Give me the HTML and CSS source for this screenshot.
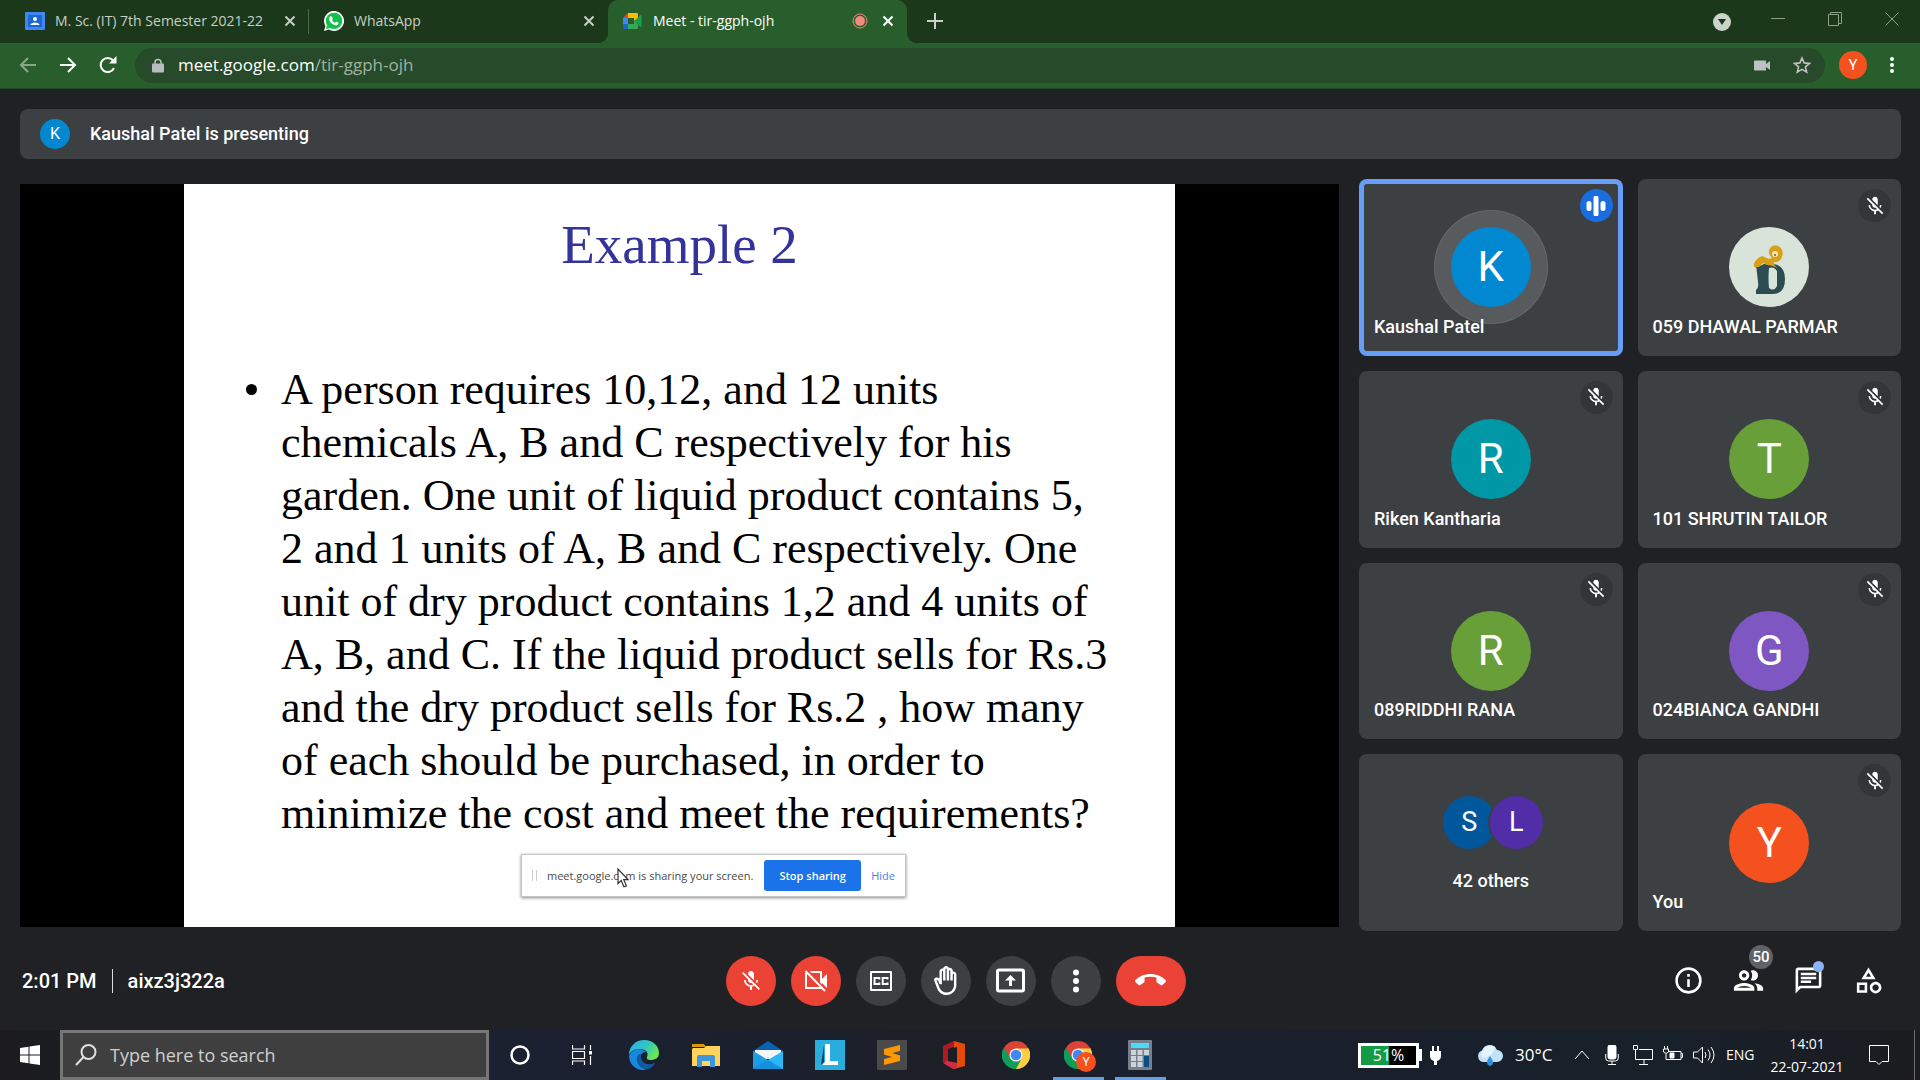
FILE: index.html
```html
<!DOCTYPE html>
<html lang="en">
<head>
<meta charset="utf-8">
<title>Meet - tir-ggph-ojh</title>
<link rel="stylesheet" href="styles.css">
</head>
<body>
<svg class="defs" aria-hidden="true">
  <symbol id="close" viewBox="0 0 12 12"><path d="M1.500 1.500l9 9m0-9l-9 9" stroke="currentColor" stroke-width="2" fill="none"/></symbol>
  <symbol id="mic-off" viewBox="0 0 24 24"><path fill="currentColor" d="M19 11h-1.700c0 .74-.16 1.430-.43 2.050l1.230 1.230c.56-.98.9-2.090.9-3.280zm-4.020.17c0-.06.02-.11.02-.17V5c0-1.660-1.340-3-3-3S9 3.340 9 5v.18l5.980 5.990zM4.270 3L3 4.270l6.010 6.010V11c0 1.660 1.330 3 2.990 3 .22 0 .44-.03.65-.08l1.660 1.660c-.71.33-1.500.52-2.310.52-2.760 0-5.300-2.100-5.300-5.100H5c0 3.410 2.720 6.230 6 6.720V21h2v-3.280c.91-.13 1.770-.45 2.540-.9L19.730 21 21 19.730 4.270 3z"/></symbol>
  <symbol id="chrome" viewBox="0 0 32 32">
    <path fill="#db4437" d="M16 16L2.140 8A16 16 0 0 1 29.860 8z"/>
    <path fill="#ffcd40" d="M16 16L29.860 8A16 16 0 0 1 16 32z"/>
    <path fill="#0f9d58" d="M16 16l0 16A16 16 0 0 1 2.140 8z"/>
    <path fill="#db4437" d="M16 8.500H30.100L29.860 8 16 4 2.140 8l7.300 11.500z"/>
    <path fill="#ffcd40" d="M16 8.500h14.100A16 16 0 0 1 16 32l6.600-12.200z"/>
    <path fill="#0f9d58" d="M2.140 8A16 16 0 0 0 16 32l6.600-12.200L16 23l-6.500-3.200z"/>
    <circle cx="16" cy="16" r="7.500" fill="#f1f1f1"/><circle cx="16" cy="16" r="6" fill="#4285f4"/>
  </symbol>
</svg>

<header class="browser">
  <nav class="tabs" aria-label="Tabs">
    <div class="tab tab-first">
      <svg class="favicon" viewBox="0 0 20 20"><rect width="20" height="18" y="1" rx="1" fill="#4285f4"/><rect x="3" y="4" width="14" height="12" fill="#1967d2"/><circle cx="10" cy="8" r="2" fill="#fff"/><path d="M5.500 14c0-3.500 9-3.500 9 0z" fill="#fff"/></svg>
      <span class="tab-title">M. Sc. (IT) 7th Semester 2021-22</span>
      <button class="tab-close" aria-label="Close tab"><svg><use href="#close"/></svg></button>
    </div>
    <div class="tab">
      <svg class="favicon" viewBox="0 0 20 20"><path d="M0 20l1.400-5A10 10 0 1 1 5 18.600z" fill="#fff"/><circle cx="10" cy="9.900" r="8.200" fill="#12c04b"/><path d="M2 18l1-4 3 3z" fill="#12c04b"/><path d="M6.500 5.300l1.300 0 1 2.400-.8 1.200c.8 1.400 1.700 2.300 3.200 2.900l1-1.200 2.300 1.100c.2 1.700-1.200 2.600-2.600 2.600-3.600-.4-6.300-3.200-6.800-6 0-1.400.6-2.500 1.400-3z" fill="#fff"/></svg>
      <span class="tab-title">WhatsApp</span>
      <button class="tab-close" aria-label="Close tab"><svg><use href="#close"/></svg></button>
    </div>
    <div class="tab tab-active">
      <svg class="favicon" viewBox="0 0 20 20"><path d="M0 7l5-5v5z" fill="#ea4335"/><path d="M5 2h8.500c1 0 1.500.5 1.500 1.500V8l-4 3V7H5z" fill="#fbbc04"/><path d="M0 7h5v6H0z" fill="#4285f4"/><path d="M0 13h5v5H1.500C.5 18 0 17.500 0 16.500z" fill="#1967d2"/><path d="M5 13h6V9l4 3v4.500c0 1-.5 1.500-1.500 1.500H5z" fill="#34a853"/><path d="M11 10l6.500-6c.6-.4 1 0 1 .5v11c0 .5-.4.9-1 .5z" fill="#1e9e4b"/></svg>
      <span class="tab-title">Meet - tir-ggph-ojh</span>
      <svg class="recording" viewBox="0 0 16 16"><circle cx="8" cy="8" r="7" fill="none" stroke="#f28b82"/><circle cx="8" cy="8" r="5" fill="#f28b82"/></svg>
      <button class="tab-close" aria-label="Close tab"><svg><use href="#close"/></svg></button>
    </div>
    <button class="new-tab" aria-label="New tab"><svg viewBox="0 0 16 16"><path d="M8 0v16M0 8h16" stroke="#cbd2cb" stroke-width="2"/></svg></button>
    <div class="window-controls">
      <button class="media" aria-label="Search tabs"><svg viewBox="0 0 18 18"><circle cx="9" cy="9" r="9" fill="#cbd3cb"/><path d="M5 6h8l-4 6z" fill="#1c381b"/></svg></button>
      <button aria-label="Minimize"><svg viewBox="0 0 14 14"><path d="M0 6.500h14"/></svg></button>
      <button aria-label="Restore"><svg viewBox="0 0 14 14"><path d="M.5 2.500h10v11H.5zM2.500 2.500v-2h11v11h-3"/></svg></button>
      <button aria-label="Close"><svg viewBox="0 0 14 14"><path d="M.5.5l13 13m0-13l-13 13"/></svg></button>
    </div>
  </nav>
  <div class="toolbar">
    <button class="nav-button dim" aria-label="Back"><svg viewBox="0 0 18 18"><path d="M17 9H2m7-7L2 9l7 7"/></svg></button>
    <button class="nav-button" aria-label="Forward"><svg viewBox="0 0 18 18"><path d="M1 9h15M9 2l7 7-7 7"/></svg></button>
    <button class="nav-button" aria-label="Reload"><svg viewBox="0 0 18 18"><path d="M15 12A7 7 0 1 1 14 4.500"/><path d="M17.500 0v7.500H10z" class="solid"/></svg></button>
    <div class="omnibox">
      <svg class="lock" viewBox="0 0 12 14"><path d="M3 6V4a3 3 0 0 1 6 0v2" fill="none" stroke="#b9c2ba" stroke-width="1.500"/><rect y="5" width="12" height="9" rx="1" fill="#b9bcc0"/></svg>
      <div class="url" role="textbox" contenteditable="true" spellcheck="false" aria-label="Address">meet.google.com<span>/tir-ggph-ojh</span></div>
      <svg class="camera" viewBox="0 0 16 12"><path d="M1 1h11v3.500L16 1.500v9L12 7.500V11H1q-1 0-1-1V2q0-1 1-1z" fill="#bdc1c0"/></svg>
      <button class="star" aria-label="Bookmark this tab"><svg viewBox="0 0 18 18"><path d="M9 2l2.100 4.900 5.400.5-4.100 3.500 1.300 5.300L9 13.400l-4.700 2.800 1.300-5.300L1.500 7.400l5.400-.5z" fill="none" stroke="#bdc1c0" stroke-width="1.600"/></svg></button>
    </div>
    <button class="profile" aria-label="Profile">Y</button>
    <button class="menu" aria-label="Menu"><svg viewBox="0 0 4 18"><circle cx="2" cy="3" r="2"/><circle cx="2" cy="9" r="2"/><circle cx="2" cy="15" r="2"/></svg></button>
  </div>
</header>

<main class="meet">
  <div class="banner"><span class="avatar avatar-small blue">K</span><span>Kaushal Patel is presenting</span></div>

  <div class="content">
    <section class="stage" aria-label="Presentation">
      <div class="slide">
        <h1>Example 2</h1>
        <ul>
          <li>A person requires 10,12, and 12 units<br>chemicals A, B and C respectively for his<br>garden. One unit of liquid product contains 5,<br>2 and 1 units of A, B and C respectively. One<br>unit of dry product contains 1,2 and 4 units of<br>A, B, and C. If the liquid product sells for Rs.3<br>and the dry product sells for Rs.2 , how many<br>of each should be purchased, in order to<br>minimize the cost and meet the requirements?</li>
        </ul>
        <div class="share">
          <span class="grip"></span>
          <span class="share-text">meet.google.com is sharing your screen.</span>
          <button class="stop">Stop sharing</button>
          <a href="#">Hide</a>
          <svg class="cursor" viewBox="0 0 12 20"><path d="M1 1v14.500l3.200-3 2.700 6.300 2.500-1-2.700-6.200h4.300z" fill="#fff" stroke="#333" stroke-width="1.200"/></svg>
        </div>
      </div>
    </section>

    <section class="people" aria-label="Participants">
      <article class="tile speaking"><span class="badge speaker"><svg viewBox="0 0 20 20"><path d="M3 7.500v5M10 2v16M17 7.500v5" stroke="#fff" stroke-width="5" stroke-linecap="round"/></svg></span><span class="avatar blue">K</span><span class="name">Kaushal Patel</span></article>
      <article class="tile"><span class="badge"><svg><use href="#mic-off"/></svg></span>
        <svg class="avatar" viewBox="0 0 80 80"><rect width="80" height="80" fill="#d8e4d9"/><path fill="#2b4c50" d="M27 38q4 2 8-1h9q12 1 12 15 0 15-12 15H27v-4q3-2 2-8l-1-9zm13 3q-1 10 0 20 5 4 8-2V44q-3-5-8-3z"/><path fill="#d9a017" d="M25 40q0-8 8-11l7 3 3-1q-5-5-2-10 4-5 10-1 5 5 1 12-3 4-7 3-1 3 4 6-7-3-11-3l-4-2-4 4z"/><circle cx="46" cy="27" r="3" fill="#efe9c0"/><circle cx="46" cy="28" r="1" fill="#7a5a10"/><path d="M28 33q-5 5-1 8" fill="none" stroke="#d9a017"/></svg>
        <span class="name">059 DHAWAL PARMAR</span></article>
      <article class="tile"><span class="badge"><svg><use href="#mic-off"/></svg></span><span class="avatar teal">R</span><span class="name">Riken Kantharia</span></article>
      <article class="tile"><span class="badge"><svg><use href="#mic-off"/></svg></span><span class="avatar green">T</span><span class="name">101 SHRUTIN TAILOR</span></article>
      <article class="tile"><span class="badge"><svg><use href="#mic-off"/></svg></span><span class="avatar green">R</span><span class="name">089RIDDHI RANA</span></article>
      <article class="tile"><span class="badge"><svg><use href="#mic-off"/></svg></span><span class="avatar purple">G</span><span class="name">024BIANCA GANDHI</span></article>
      <article class="tile others"><div class="pair"><span class="avatar navy">S</span><span class="avatar indigo">L</span></div><span>42 others</span></article>
      <article class="tile"><span class="badge"><svg><use href="#mic-off"/></svg></span><span class="avatar orange">Y</span><span class="name">You</span></article>
    </section>
  </div>

  <footer class="controls">
    <div class="meeting"><time>2:01 PM</time><span class="code">aixz3j322a</span></div>
    <div class="calls">
      <button class="red" aria-label="Turn on microphone"><svg class="i24"><use href="#mic-off"/></svg></button>
      <button class="red" aria-label="Turn on camera"><svg class="i24" viewBox="0 0 24 24"><path d="M6 3h11v16H6L2 19V4" fill="none" stroke="currentColor" stroke-width="2"/><path d="M18 10l5-5v14l-5-5z" fill="currentColor"/><path d="M3.500 1.500l19 20" stroke="#ea4335" stroke-width="2"/><path d="M1.500 2l19.500 20" stroke="currentColor" stroke-width="2"/></svg></button>
      <button aria-label="Captions"><svg class="i24" viewBox="0 0 24 24"><path d="M2 3h20v18H2z" fill="none" stroke="currentColor" stroke-width="2" stroke-linejoin="round"/><path d="M10.300 10.500V9H5.500v6h4.800v-1.500M18.500 10.500V9h-4.800v6h4.800v-1.500" fill="none" stroke="currentColor" stroke-width="2"/></svg></button>
      <button aria-label="Raise hand"><svg class="i29" viewBox="0 0 24 24"><path fill="currentColor" d="M21 7c0-1.380-1.120-2.500-2.500-2.500-.17 0-.34.02-.5.05V4c0-1.380-1.120-2.500-2.500-2.500-.23 0-.46.03-.67.09C14.460.66 13.560 0 12.500 0c-1.230 0-2.250.89-2.460 2.060C9.870 2.020 9.690 2 9.500 2 8.120 2 7 3.120 7 4.500v5.890c-.34-.31-.76-.54-1.220-.66L5.010 9.520c-.83-.23-1.700.09-2.190.83-.38.57-.4 1.310-.15 1.950l2.560 6.430C6.490 21.910 9.570 24 13 24c4.420 0 8-3.580 8-8V7zm-2 9c0 3.310-2.690 6-6 6-2.610 0-4.950-1.590-5.910-4.010l-2.600-6.540.53.14c.46.12.83.46 1 .9L7 15h2V4.500c0-.28.22-.5.5-.5s.5.22.5.5V12h2V2.500c0-.28.22-.5.5-.5s.5.22.5.5V12h2V4c0-.28.22-.5.5-.5s.5.22.5.5v8h2V7c0-.28.22-.5.5-.5s.5.22.5.5v9z"/></svg></button>
      <button aria-label="Present now"><svg class="i29" viewBox="0 0 29 29"><rect x="1.500" y="4" width="26" height="21" rx="1.500" fill="none" stroke="currentColor" stroke-width="3"/><path d="M14.500 9l5.500 5.500h-4V20h-3v-5.500H9z" fill="currentColor"/></svg></button>
      <button aria-label="More options"><svg class="i24" viewBox="0 0 24 24" fill="currentColor"><circle cx="12" cy="3.500" r="3"/><circle cx="12" cy="12" r="3"/><circle cx="12" cy="20.500" r="3"/></svg></button>
      <button class="red hang-up" aria-label="Leave call"><svg class="i31" viewBox="0 0 24 24"><path fill="currentColor" d="M12 9c-1.600 0-3.150.25-4.600.72v3.100c0 .39-.23.74-.56.9-.98.49-1.870 1.120-2.660 1.850-.18.18-.43.28-.7.28-.28 0-.53-.11-.71-.29L.29 13.080c-.18-.17-.29-.42-.29-.7 0-.28.11-.53.29-.71C3.340 8.780 7.460 7 12 7s8.660 1.780 11.710 4.670c.18.18.29.43.29.71 0 .28-.11.53-.29.71l-2.480 2.480c-.18.18-.43.29-.71.29-.27 0-.52-.11-.7-.28-.79-.74-1.690-1.360-2.670-1.850-.33-.16-.56-.5-.56-.9v-3.100C15.150 9.250 13.600 9 12 9z"/></svg></button>
    </div>
    <div class="panels">
      <button aria-label="Meeting details"><svg class="i31" viewBox="0 0 24 24"><circle cx="12" cy="12" r="9.200" fill="none" stroke="currentColor" stroke-width="2"/><path d="M11 7h2v2h-2zm0 4h2v6h-2z" fill="currentColor"/></svg></button>
      <button aria-label="Show everyone"><svg class="i35" viewBox="0 0 24 24"><path fill="currentColor" d="M9 13.750c-2.340 0-7 1.170-7 3.500V19h14v-1.750c0-2.330-4.660-3.500-7-3.500zM4.340 17c.84-.58 2.870-1.250 4.660-1.250s3.820.67 4.660 1.250H4.340zM9 12c1.930 0 3.500-1.570 3.500-3.500S10.930 5 9 5 5.500 6.570 5.500 8.500 7.070 12 9 12zm0-5c.83 0 1.500.67 1.500 1.500S9.830 10 9 10s-1.500-.67-1.500-1.500S8.170 7 9 7zm7.040 6.810c1.160.84 1.960 1.960 1.960 3.440V19h4v-1.750c0-2.020-3.500-3.170-5.960-3.440zM15 12c1.930 0 3.500-1.570 3.500-3.500S16.930 5 15 5c-.54 0-1.040.13-1.500.35.63.89 1 1.980 1 3.150s-.37 2.260-1 3.150c.46.22.96.35 1.500.35z"/></svg><span class="count">50</span></button>
      <button aria-label="Chat"><svg class="i31" viewBox="0 0 24 24"><path fill="currentColor" d="M4 4h16v12H5.170L4 17.170V4m0-2c-1.100 0-1.990.9-1.990 2L2 22l4-4h14c1.100 0 2-.9 2-2V4c0-1.100-.9-2-2-2H4zm2 10h8v2H6v-2zm0-3h12v2H6V9zm0-3h12v2H6V6z"/></svg><span class="dot"></span></button>
      <button aria-label="Activities"><svg class="i31" viewBox="0 0 24 24"><path fill="currentColor" d="M12 2l-5.500 9h11L12 2zm0 3.840L13.930 9h-3.870L12 5.840zM17.500 13c-2.490 0-4.500 2.010-4.500 4.500s2.010 4.500 4.500 4.500 4.500-2.010 4.500-4.500-2.010-4.500-4.500-4.500zm0 7c-1.380 0-2.500-1.120-2.500-2.500s1.120-2.500 2.500-2.500 2.500 1.120 2.500 2.500-1.120 2.500-2.500 2.500zM3 21.500h8v-8H3v8zm2-6h4v4H5v-4z"/></svg></button>
    </div>
  </footer>
</main>

<div class="taskbar">
  <button class="start" aria-label="Start"><svg viewBox="0 0 20 20"><path fill="#fff" d="M0 3l8.500-1.200v7.700H0zM9.500 1.600L20 0v9.500H9.500zM0 10.500h8.500v7.700L0 17zM9.500 10.500H20V20L9.500 18.500z"/></svg></button>
  <label class="search"><svg viewBox="0 0 22 22"><circle cx="13.500" cy="8" r="7"/><path d="M8.500 13L1 21"/></svg><input type="text" placeholder="Type here to search" aria-label="Type here to search"></label>
  <div class="apps">
    <button aria-label="Cortana"><svg class="i20" viewBox="0 0 20 20"><circle cx="10" cy="10" r="8.500" fill="none" stroke="#fff" stroke-width="2.500"/></svg></button>
    <button aria-label="Task view"><svg class="i20" viewBox="0 0 20 20"><path d="M.5 0v4h12V0M.5 20v-4h12v4M.5 6.500h12v7H.5zM18.500 0v5M18.500 11v9" fill="none" stroke="#fff" stroke-width="1.200"/><path d="M17 6h3v3.500h-3z" fill="#fff"/></svg></button>
    <button aria-label="Edge"><svg class="i30" viewBox="0 0 30 30"><defs><linearGradient id="edge-top" x1="0" x2="1" y1="0" y2=".5"><stop stop-color="#2fa9e8"/><stop offset=".6" stop-color="#30c9c0"/><stop offset="1" stop-color="#69e553"/></linearGradient></defs><path fill="#1788dc" d="M0 16C3 9 12 7 17 12c-5 0-6 4-5 7 2 6 9 7 14 4-3 5-8 7-13 7C5 29 0 23 0 16z"/><path fill="#0c59a4" d="M9 15c-3 5 0 12 7 14.500 4 0 8-3 10-6.500-5 3-12 2-14-4-1-2-.5-4 .5-5.500z"/><path fill="url(#edge-top)" d="M0 15C0 6 7 0 15 0c9 0 15 6 15 13 0 5-4 7-8 7-3 0-5-1-4-3 2-4-1-8-7-8-5 0-9 2-11 6z"/></svg></button>
    <button aria-label="File Explorer"><svg class="i28" viewBox="0 0 28 28"><path d="M0 3h12l2 3H0z" fill="#d99a00"/><path d="M0 8l1-1h11l2-2h14v20H0z" fill="#ffd35c"/><path d="M5 26V16q0-2 2-2h14q2 0 2 2v10h-5v-6h-8v6z" fill="#3d97dc"/></svg></button>
    <button aria-label="Mail"><svg class="i30" viewBox="0 0 30 30"><path d="M0 11L15 1l15 10v4H0z" fill="#0861b3"/><path d="M2 10h26v9H2z" fill="#f4f7fa"/><path d="M0 11l15 9L0 29z" fill="#1b9de8"/><path d="M30 11v18H0z" fill="#2bb7f4"/><path d="M15 20l15 9H0z" fill="#1490df"/></svg></button>
    <button aria-label="Lightshot"><svg class="i30" viewBox="0 0 30 30"><path d="M0 0h30v30H0z" fill="#28addc"/><path d="M9 5L6 25l3-3z" fill="#143d69"/><path d="M10 4h5v17h8v4H7l3-3z" fill="#fff"/></svg></button>
    <button aria-label="Sublime Text"><svg class="i30" viewBox="0 0 30 30"><rect width="30" height="30" rx="1" fill="#4a4a4a"/><path d="M7 9l16-4v6l-8 2 8 2.500V21L7 25v-6l8-2-8-2.500z" fill="#ff9800"/></svg></button>
    <button aria-label="Office"><svg class="i30" viewBox="0 0 30 30"><path d="M15 1l-11 5v17l5-2V9l6-2z" fill="#b01822"/><path d="M15 1l11 3v22l-11 3z" fill="#e64a09"/><path d="M4 23l5-3 9 3v5l-4 1z" fill="#d22b45"/><path d="M18 7L9 9v12l9 2z" fill="#1b1c24"/></svg></button>
    <button aria-label="Chrome"><svg class="i28"><use href="#chrome"/></svg></button>
    <button class="running" aria-label="Chrome, profile Y"><svg class="i28"><use href="#chrome"/></svg><span class="profile-badge">Y</span></button>
    <button class="running" aria-label="Calculator"><svg class="i30" viewBox="0 0 30 30"><rect x="3" width="24" height="30" rx="1" fill="#75808a"/><rect x="6" y="3" width="18" height="5" fill="#4ed8fa"/><path d="M6 10h5v5H6zM12.500 10h5v5h-5zM19 10h5v5h-5zM6 16h5v5H6zM12.500 16h5v5h-5zM6 22h5v5H6zM12.500 22h5v5h-5z" fill="#ccd3da"/><path d="M19 16h5v11h-5z" fill="#0c4a88"/></svg></button>
  </div>
  <div class="tray">
    <span class="battery">51%</span>
    <svg class="plug" viewBox="0 0 11 22"><path d="M2 2h2v5h3V2h2v5h2v5q0 4-4 5v4H4v-4q-4-1-4-5V7h2z" fill="#fff"/></svg>
    <svg class="weather" viewBox="0 0 26 24"><path d="M6 19a6 6 0 0 1-1-11.500A8 8 0 0 1 20 7a6 6 0 0 1 0 12z" fill="#c2e2fa"/><path d="M6 15a5 5 0 0 1 0-8 8 8 0 0 1 12-3q-2 10-12 11z" fill="#e5f3fd"/><path d="M13 13q-6 8 0 10 6-2 0-10z" fill="#3390e0"/></svg>
    <span class="temp">30°C</span>
    <svg class="line chevron" viewBox="0 0 16 20"><path d="M1 14l7-8 7 8"/></svg>
    <svg class="line mic" viewBox="0 0 14 20"><rect x="3" y="0" width="8" height="14" rx="2" fill="#fff"/><path d="M.7 9v4q0 3 3 3h6.600q3 0 3-3V9M7 16v4M3 19.500h8"/></svg>
    <svg class="line i20" viewBox="0 0 20 20"><path d="M6 4.500h13.500v10H2.500V9M11 15v4M6 19.500h9M.5.5h4v4h-4zM2.500 5v4"/></svg>
    <svg class="line i20" viewBox="0 0 20 20"><path d="M6 6.500h12v8H6M18.500 8.500h1v4h-1M1.500 1v3M4.500 1v3M.5 4h5v3q-2.500 3-5 0zM3 9v5.500h3"/><path d="M7 8h4v5H7z" fill="#fff"/></svg>
    <svg class="line speaker-icon" viewBox="0 0 22 20"><path d="M.5 7h4l5-5v16l-5-5h-4zM12 7q2 3 0 6M15 4.500q4 5.500 0 11M18 2q6 8 0 16"/></svg>
    <span class="lang">ENG</span>
    <time class="clock">14:01<br>22-07-2021</time>
    <svg class="line i20 notice" viewBox="0 0 20 20"><path d="M.5.500h19v16H13l-3 3-3-3H.5z"/></svg>
  </div>
</div>
</body>
</html>
```
FILE: styles.css
```css
* { box-sizing: border-box; }

body {
  margin: 0;
  min-height: 100vh;
  display: flex;
  flex-direction: column;
  background: #202124;
  color: #fff;
  font: 15px/20px "Open Sans", sans-serif;
}

button {
  display: flex;
  align-items: center;
  justify-content: center;
  flex: none;
  padding: 0;
  border: 0;
  background: none;
  color: inherit;
  font: inherit;
}

svg { display: block; flex: none; }
.defs { position: absolute; width: 0; height: 0; }
.i20 { width: 20px; height: 20px; }
.i24 { width: 24px; height: 24px; }
.i28 { width: 28px; height: 28px; }
.i29 { width: 29px; height: 29px; }
.i30 { width: 30px; height: 30px; }
.i31 { width: 31px; height: 31px; }
.i35 { width: 35px; height: 35px; }

/* Browser frame */
.tabs {
  display: flex;
  height: 43px;
  padding-left: 10px;
  background: #1c381b;
  font-size: 14px;
}
.tab {
  position: relative;
  display: flex;
  align-items: center;
  width: 299px;
  gap: 10px;
  padding: 0 13px 2px 15px;
  color: #c6cfc6;
}
.tab-first::after {
  content: "";
  position: absolute;
  right: 0;
  top: 9px;
  width: 1px;
  height: 25px;
  background: #4f694e;
}
.tab-title { flex: 1; white-space: nowrap; }
.tab-active { background: #285e2b; color: #fff; border-radius: 10px 10px 0 0; }
.tab-active::before, .tab-active::after {
  content: "";
  position: absolute;
  bottom: 0;
  width: 10px;
  height: 10px;
}
.tab-active::before { left: -10px; background: radial-gradient(circle at 0 0, transparent 10px, #285e2b 10px); }
.tab-active::after { right: -10px; background: radial-gradient(circle at 100% 0, transparent 10px, #285e2b 10px); }
.favicon { width: 20px; height: 20px; }
.tab-close svg { width: 12px; height: 12px; }
.recording { width: 16px; height: 16px; margin-right: 4px; }
.new-tab { width: 56px; padding-bottom: 1px; }
.new-tab svg { width: 16px; height: 16px; }
.window-controls { display: flex; margin-left: auto; padding-bottom: 6px; }
.window-controls button { width: 57px; }
.window-controls svg { width: 14px; height: 14px; fill: none; stroke: #8ba08a; }
.window-controls .media { padding-top: 6px; width: 54px; }
.window-controls .media svg { width: 18px; height: 18px; stroke: none; }

.toolbar {
  display: flex;
  align-items: center;
  height: 46px;
  padding: 4px 16px 5px 8px;
  background: #285e2b;
  border-bottom: 1px solid #24482a;
}
.nav-button { width: 40px; height: 36px; }
.nav-button svg { width: 18px; height: 18px; fill: none; stroke: #fff; stroke-width: 2; }
.nav-button .solid { fill: #fff; stroke: none; }
.dim { opacity: .45; }
.omnibox {
  display: flex;
  align-items: center;
  flex: 1;
  height: 35px;
  margin-left: 7px;
  padding: 0 14px 0 17px;
  border-radius: 18px;
  background: #274a2a;
  font-size: 17px;
}
.lock { width: 12px; height: 15px; margin-right: 14px; }
.url { flex: 1; outline: none; }
.url span { color: #9fb3a0; }
.camera { width: 16px; height: 13px; }
.star { margin-left: 23px; }
.star svg { width: 18px; height: 18px; }
.profile {
  width: 28px;
  height: 28px;
  margin-left: 14px;
  border-radius: 50%;
  background: #f4511e;
  font-family: Roboto, sans-serif;
}
.menu { margin: 0 10px 0 23px; }
.menu svg { width: 4px; height: 18px; fill: #fff; }

/* Meeting */
.meet {
  flex: 1;
  display: flex;
  flex-direction: column;
  padding: 20px 19px 0 20px;
  font: 500 18px/24px Roboto, sans-serif;
}
.banner {
  display: flex;
  align-items: center;
  gap: 20px;
  height: 50px;
  padding: 0 20px;
  border-radius: 8px;
  background: #3c4043;
}
.content {
  flex: 1;
  display: grid;
  grid-template-columns: 1319fr 542fr;
  gap: 20px;
  margin-top: 20px;
}
.stage {
  display: flex;
  justify-content: center;
  margin: 5px 0 4px;
  background: #000;
}
.slide {
  width: 991px;
  padding: 29px 40px 20px 97px;
  background: #fff;
  color: #000;
  font-family: "Liberation Serif", serif;
}
.slide h1 {
  margin: 0 57px 86px 0;
  color: #333399;
  font-size: 55px;
  font-weight: 400;
  line-height: 64px;
  text-align: center;
}
.slide ul { margin: 0; padding: 0; list-style: none; font: 400 44px/53px "Liberation Serif", serif; }
.slide li { position: relative; white-space: nowrap; }
.slide li::before {
  content: "";
  position: absolute;
  left: -35px;
  top: 21px;
  width: 11px;
  height: 11px;
  border-radius: 50%;
  background: #000;
}
.share {
  position: relative;
  display: flex;
  align-items: center;
  width: 385px;
  height: 43px;
  margin: 14px 0 0 240px;
  padding: 0 10px;
  border: 1px solid #c4c4c4;
  box-shadow: 0 1px 3px #888;
  color: #4a4a4a;
  font: 400 11px/16px "Open Sans", sans-serif;
}
.grip { width: 5px; height: 11px; margin-right: 10px; border: solid #ccc; border-width: 0 1px; }
.share-text { flex: 1; white-space: nowrap; }
.stop {
  width: 97px;
  height: 31px;
  margin-right: 10px;
  border-radius: 3px;
  background: #1a73e8;
  color: #fff;
  font-weight: 600;
}
.share a { color: #4a80e8; text-decoration: none; }
.cursor { position: absolute; left: 95px; top: 13px; width: 12px; height: 20px; }

.people {
  display: grid;
  grid-template-columns: 1fr 1fr;
  grid-auto-rows: 1fr;
  gap: 15px;
}
.tile {
  position: relative;
  display: flex;
  align-items: center;
  justify-content: center;
  min-height: 160px;
  border-radius: 8px;
  background: #3c4043;
}
.speaking { box-shadow: inset 0 0 0 5px #669df6; }
.speaking .avatar { box-shadow: 0 0 0 16px #585b5e, 0 0 0 17px #66696c; }
.name { position: absolute; left: 15px; bottom: 17px; }
.badge {
  position: absolute;
  top: 10px;
  right: 10px;
  display: flex;
  align-items: center;
  justify-content: center;
  width: 33px;
  height: 33px;
  border-radius: 50%;
  background: #323639;
}
.badge svg { width: 22px; height: 22px; }
.badge.speaker { background: #1a6dde; }
.badge.speaker svg { width: 20px; height: 20px; }
.avatar {
  display: flex;
  align-items: center;
  justify-content: center;
  width: 80px;
  height: 80px;
  border-radius: 50%;
  font-size: 42px;
  font-weight: 400;
}
.avatar-small { width: 30px; height: 30px; font-size: 16px; }
.blue { background: #0288d1; }
.teal { background: #0097a7; }
.green { background: #689f38; }
.purple { background: #7e57c2; }
.navy { background: #01579b; }
.indigo { background: #512da8; }
.orange { background: #f4511e; }
.others { flex-direction: column; gap: 20px; padding-top: 3px; }
.pair { display: flex; padding-left: 4px; }
.pair .avatar { width: 53px; height: 53px; font-size: 27px; }
.pair .indigo { margin-left: -6px; box-shadow: 0 0 0 2px #3c4043; }

.controls {
  display: grid;
  grid-template-columns: 1fr auto 1fr;
  align-items: center;
  height: 99px;
}
.meeting { display: flex; align-items: center; padding-left: 2px; font-size: 20px; }
.code { margin-left: 15px; padding-left: 15px; border-left: 1px solid #dadce0; }
.calls { display: flex; gap: 15px; margin-right: 10px; }
.calls button { width: 50px; height: 50px; border-radius: 25px; background: #3c4043; }
.calls .red { background: #ea4335; }
.calls .hang-up { width: 70px; }
.panels { display: flex; justify-content: flex-end; padding-right: 3px; }
.panels button { position: relative; width: 60px; height: 50px; }
.count {
  position: absolute;
  top: -11px;
  left: 31px;
  width: 24px;
  height: 24px;
  border-radius: 50%;
  background: #5f6368;
  font-size: 15px;
}
.dot { position: absolute; top: 5px; left: 35px; width: 11px; height: 11px; border-radius: 50%; background: #8ab4f8; }

/* Windows taskbar */
.taskbar {
  display: flex;
  height: 50px;
  background: linear-gradient(90deg, #1c1c1e, #1a2130 25%, #1b202d 40%, #1d1f26 50%, #1a202d 58%, #18202a 88%, #1c1c1f);
}
.start { width: 60px; }
.start svg { width: 20px; height: 20px; }
.search {
  display: flex;
  align-items: center;
  width: 429px;
  gap: 13px;
  padding-left: 12px;
  border: 3px solid #767676;
  background: #3f3f3f;
}
.search svg { width: 22px; height: 22px; fill: none; stroke: #e0e0e0; stroke-width: 2; }
.search input {
  flex: 1;
  min-width: 0;
  padding: 0;
  border: 0;
  outline: 0;
  background: none;
  color: #fff;
  font: 18px/24px "Open Sans", sans-serif;
}
.search input::placeholder { color: #d0d0d0; opacity: 1; }
.apps { display: flex; }
.apps button { position: relative; width: 62px; }
.running::after {
  content: "";
  position: absolute;
  bottom: 0;
  left: 6px;
  width: 51px;
  height: 3px;
  background: #62a0e3;
}
.profile-badge {
  position: absolute;
  top: 22px;
  left: 29px;
  width: 20px;
  height: 20px;
  border-radius: 50%;
  background: #f4511e;
  font: 12px/20px Roboto, sans-serif;
}
.tray { display: flex; align-items: center; margin-left: auto; margin-right: 5px; padding-right: 25px; border-right: 1px solid #6b6d70; }
.battery {
  width: 61px;
  height: 25px;
  border: 3px solid #fff;
  background: linear-gradient(90deg, #169b45 50%, #000 50%);
  font-size: 16px;
  line-height: 19px;
  text-align: center;
}
.battery + .plug { border-left: 3px solid #fff; border-image: linear-gradient(transparent 25%, #fff 25%, #fff 75%, transparent 75%) 1; padding-left: 8px; width: 22px; height: 22px; }
.weather { width: 26px; height: 24px; margin-left: 36px; }
.temp { width: 52px; margin-left: 12px; font-size: 17px; }
.line { fill: none; stroke: #fff; stroke-width: 1; }
.chevron { width: 16px; height: 20px; margin-left: 7px; }
.mic { width: 14px; height: 20px; margin: 0 14px 0 15px; }
.tray .i20 { margin-right: 10px; }
.speaker-icon { width: 22px; height: 20px; }
.lang { width: 32px; margin-left: 11px; font-size: 14px; }
.clock { width: 88px; margin: 0 18px 0 5px; font-size: 14px; line-height: 23px; text-align: center; }
.tray .notice { margin-right: 0; }
```
